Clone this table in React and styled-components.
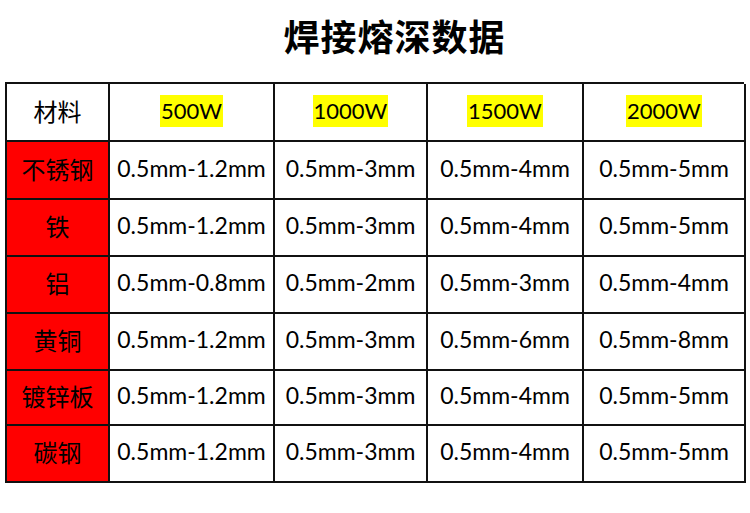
import styled, { createGlobalStyle } from 'styled-components';

const GlobalStyle = createGlobalStyle`
  html, body {
    margin: 0;
    padding: 0;
    background: #ffffff;
  }
  body {
    font-family: "Noto Sans CJK SC", sans-serif;
    color: #000;
  }
`;

const COLS = [103, 165, 153, 156, 162];
const ROWS = [58, 58, 57, 57, 57, 55, 57];

const powers = ['500W', '1000W', '1500W', '2000W'];

const data = [
  ['不锈钢', '0.5mm-1.2mm', '0.5mm-3mm', '0.5mm-4mm', '0.5mm-5mm'],
  ['铁', '0.5mm-1.2mm', '0.5mm-3mm', '0.5mm-4mm', '0.5mm-5mm'],
  ['铝', '0.5mm-0.8mm', '0.5mm-2mm', '0.5mm-3mm', '0.5mm-4mm'],
  ['黄铜', '0.5mm-1.2mm', '0.5mm-3mm', '0.5mm-6mm', '0.5mm-8mm'],
  ['镀锌板', '0.5mm-1.2mm', '0.5mm-3mm', '0.5mm-4mm', '0.5mm-5mm'],
  ['碳钢', '0.5mm-1.2mm', '0.5mm-3mm', '0.5mm-4mm', '0.5mm-5mm'],
];

const Page = styled.div`
  width: 750px;
  height: 513px;
  padding: 0 6px 0 5px;
  box-sizing: border-box;
`;

const Title = styled.h1`
  margin: 0;
  height: 82px;
  padding: 14px 0 0 40px;
  box-sizing: border-box;
  text-align: center;
  font-family: "Noto Sans CJK SC", sans-serif;
  font-weight: 700;
  font-size: 36px;
  line-height: 42px;
  letter-spacing: 1px;
`;

const Grid = styled.div`
  display: grid;
  grid-template-columns: ${COLS.map((c) => `${c}px`).join(' ')};
  grid-template-rows: ${ROWS.map((r) => `${r}px`).join(' ')};
  width: 739px;
  box-sizing: border-box;
  border-top: 2px solid #111;
  border-left: 2px solid #111;
`;

const Cell = styled.div`
  display: flex;
  align-items: center;
  justify-content: center;
  box-sizing: border-box;
  padding-bottom: ${(p) => (p.$cjk ? '4px' : '5px')};
  border-right: 2px solid #111;
  border-bottom: 2px solid #111;
  background: ${(p) => (p.$material ? '#ff0000' : '#ffffff')};
  font-family: ${(p) =>
    p.$cjk ? '"Noto Sans CJK SC", sans-serif' : 'Lato, "Noto Sans CJK SC", sans-serif'};
  font-size: ${(p) => (p.$cjk ? '24px' : '23px')};
  font-weight: 400;
  color: #000;
  white-space: nowrap;
`;

const Highlight = styled.span`
  display: inline-block;
  background: #ffff00;
  font-size: 22px;
  line-height: 32px;
  padding: 0 1px;
  margin-top: 3px;
`;

export default function App() {
  return (
    <Page>
      <GlobalStyle />
      <Title>焊接熔深数据</Title>
      <Grid>
        <Cell $cjk>材料</Cell>
        {powers.map((p) => (
          <Cell key={p}>
            <Highlight>{p}</Highlight>
          </Cell>
        ))}
        {data.map((row) =>
          row.map((v, i) => (
            <Cell key={row[0] + i} $cjk={i === 0} $material={i === 0}>
              {v}
            </Cell>
          ))
        )}
      </Grid>
    </Page>
  );
}
